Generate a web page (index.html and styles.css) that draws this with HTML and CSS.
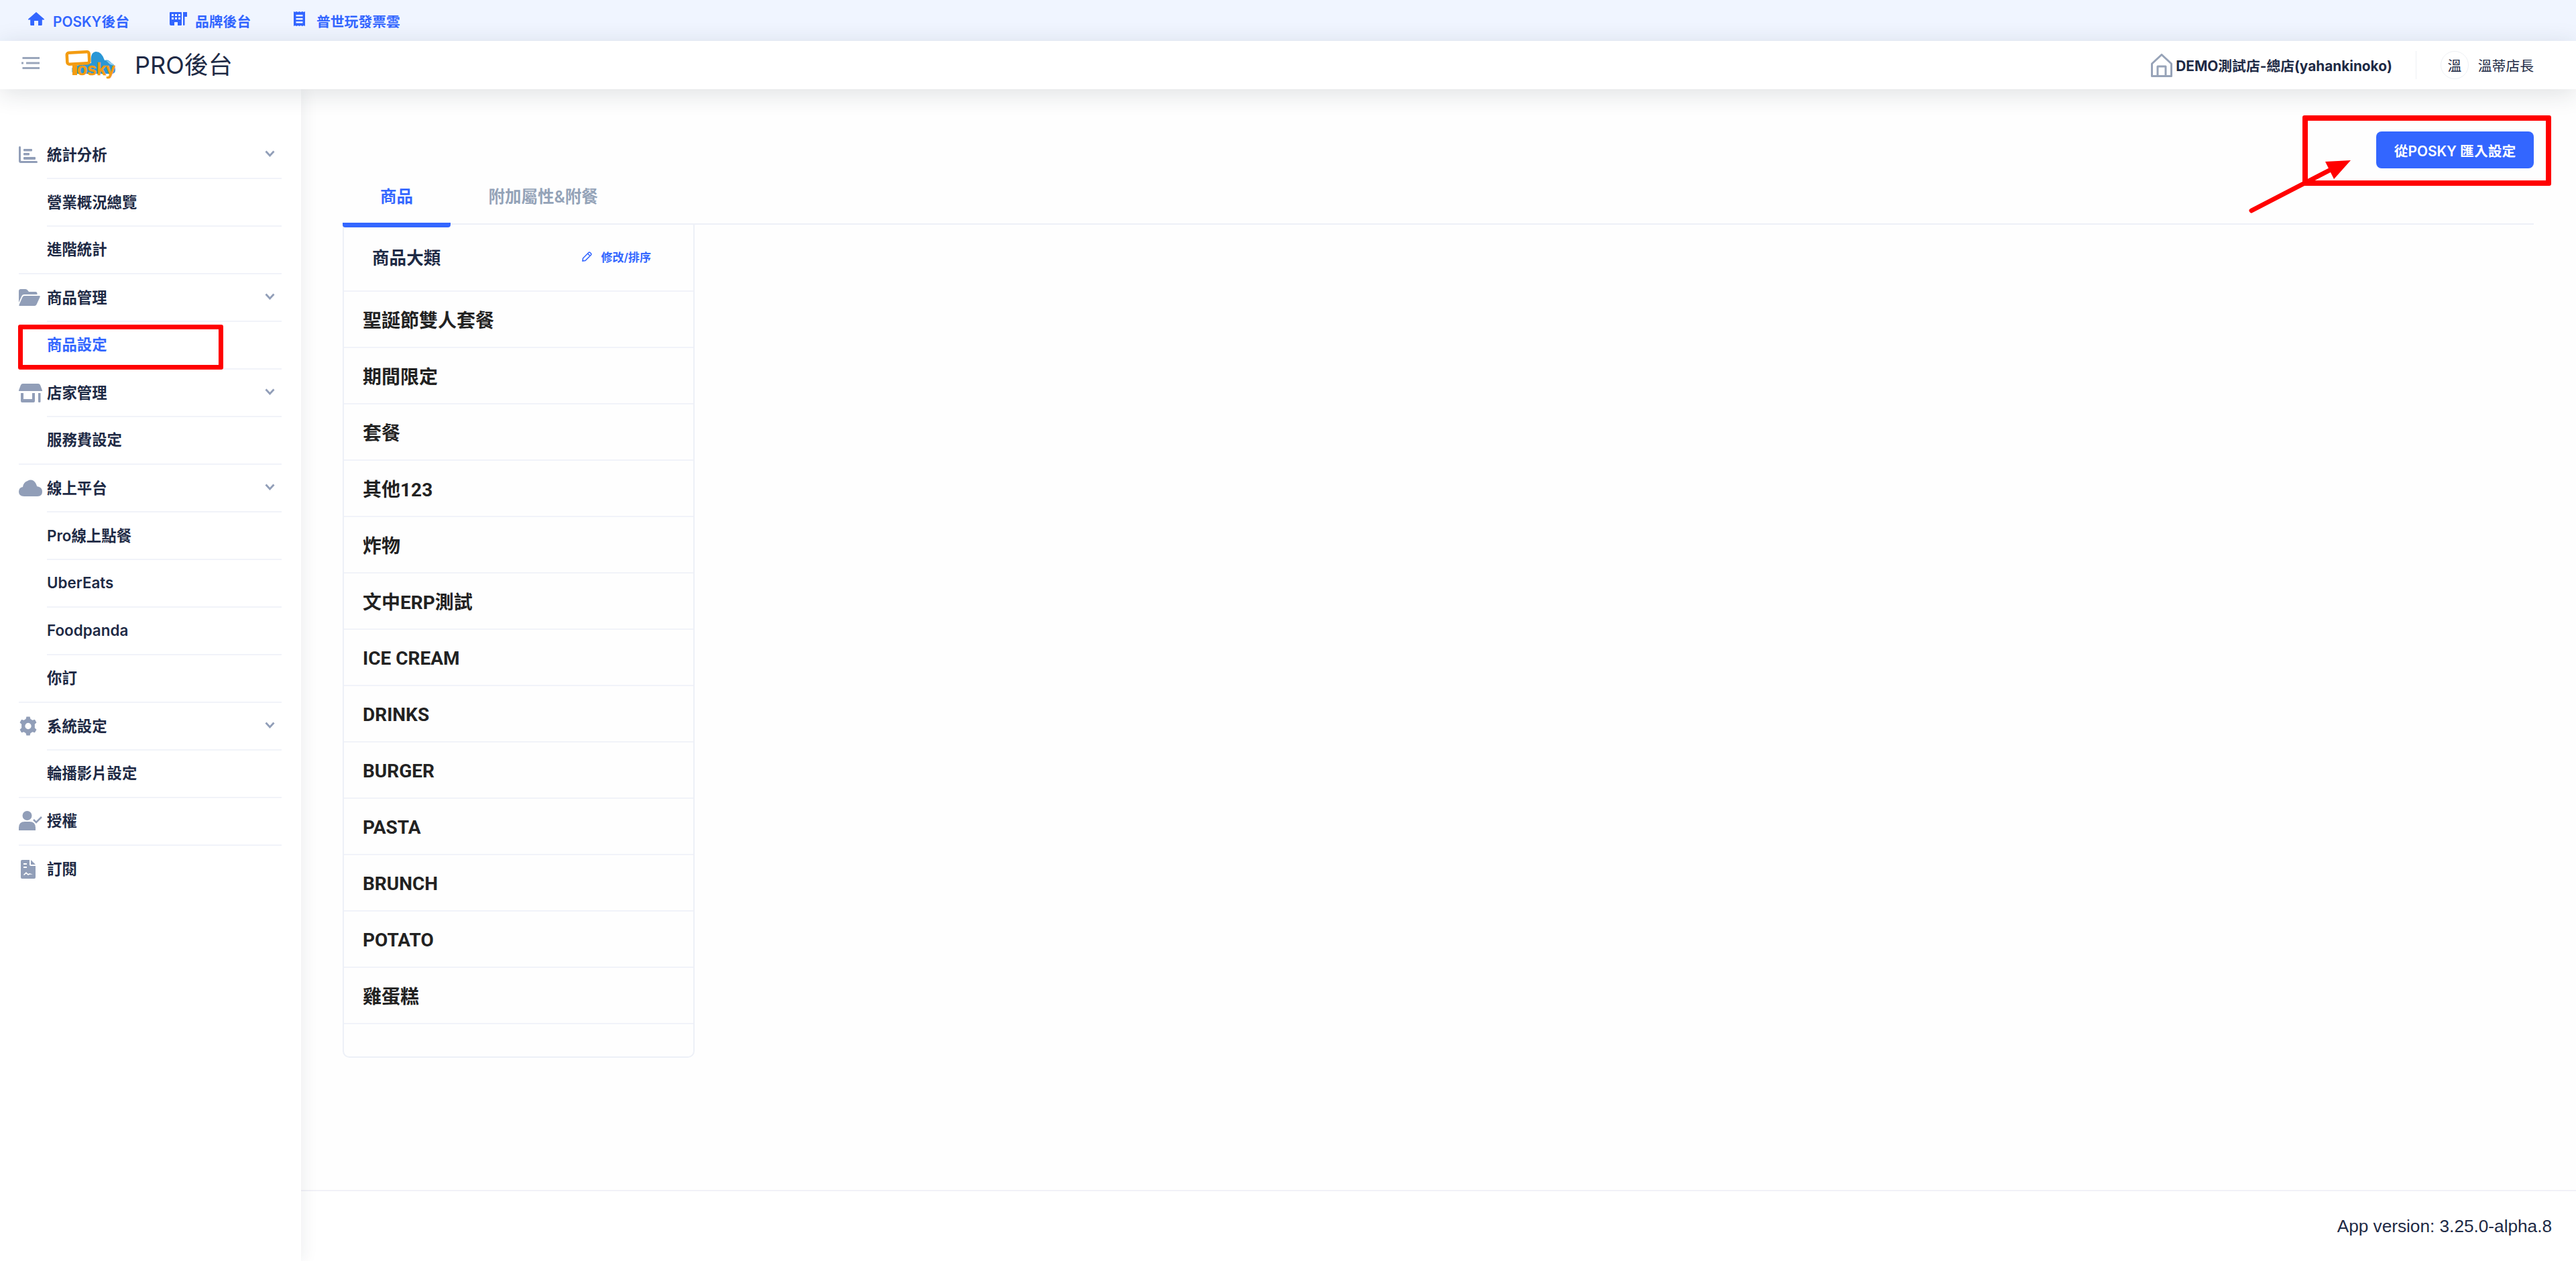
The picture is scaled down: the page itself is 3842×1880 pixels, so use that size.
FILE: index.html
```html
<!DOCTYPE html>
<html lang="zh-Hant">
<head>
<meta charset="utf-8">
<title>PRO後台</title>
<link rel="stylesheet" href="styles.css">
</head>
<body>
<div class="page">
  <nav class="topbar">
    <a class="toplink link-home">
      <svg class="ti ti-home" viewBox="0 0 24 20"><path d="M12 0 L24 10.5 Q24.3 11.6 23 11.6 H20.8 V18.8 Q20.8 20 19.6 20 H15 V13 H9 V20 H4.4 Q3.2 20 3.2 18.8 V11.6 H1 Q-.3 11.6 0 10.5 Z"/></svg>
      <span>POSKY後台</span>
    </a>
    <a class="toplink link-brand">
      <svg class="ti ti-brand" viewBox="0 0 26 20"><path fill-rule="evenodd" d="M1 0 H17 Q18 0 18 1 V19 Q18 20 17 20 H12 V15 H7 V20 H2 Q0 20 0 18 V1 Q0 0 1 0 Z M3 3 V6 H6 V3 Z M8 3 V6 H11 V3 Z M13 3 V6 H16 V3 Z M3 8 V11 H6 V8 Z M8 8 V11 H11 V8 Z M13 8 V11 H16 V8 Z"/><path d="M20 0 H26 V7 H22.5 V19 Q22.5 20 21.2 20 Q20 20 20 19 Z"/></svg>
      <span>品牌後台</span>
    </a>
    <a class="toplink link-invoice">
      <svg class="ti ti-invoice" viewBox="0 0 17 22"><path fill-rule="evenodd" d="M0 0 L2 1 L4 0 L6.5 1 L8.5 0 L10.5 1 L13 0 L15 1 L17 0 V22 L15 21 L13 22 L10.5 21 L8.5 22 L6.5 21 L4 22 L2 21 L0 22 Z M3.5 5 V7.5 H13.5 V5 Z M3.5 10 V12.5 H13.5 V10 Z M3.5 15 V17.5 H13.5 V15 Z"/></svg>
      <span>普世玩發票雲</span>
    </a>
  </nav>

  <header class="header">
    <svg class="burger" viewBox="0 0 27 18"><path d="M1.5 0 H27 V3 H1.5 Z M7 7.5 H27 V10.5 H7 Z M1.5 15 H27 V18 H1.5 Z M0 7.5 H3 V10.5 H0 Z"/></svg>
    <svg class="logo" viewBox="0 0 74 43">
      <path fill="#2a97d6" d="M14 34 Q9 34 9 28 Q9 23 15 22 Q38 18 38 18 Q36 2 45 1 Q54 1 58 14 Q64 12 68 18 Q74 20 74 28 Q74 34 68 34 Z"/>
      <path fill="#8fcdf0" d="M9 28 Q9 23 15 22 L17 34 H14 Q9 34 9 28 Z M60 14 Q68 15 72 22 L66 20 Z"/>
      <rect class="logo-sign" x="2" y="2" width="33" height="17" rx="3" transform="rotate(-3 18 10)"/>
      <path fill="#f39c12" d="M10 19 H17 V36 H10 Z"/>
      <text class="logo-text" x="17" y="36">osky</text>
    </svg>
    <h1 class="brand">PRO後台</h1>
    <div class="store">
      <svg class="store-icon" viewBox="0 0 32 35"><path d="M1.5 15 L16 1.5 L30.5 15 V33.5 H1.5 Z M10 33.5 V19 H22 V33.5" stroke-linejoin="round"/></svg>
      <span class="store-name">DEMO測試店-總店(yahankinoko)</span>
    </div>
    <div class="user">
      <span class="avatar">溫</span>
      <span class="user-name">溫蒂店長</span>
    </div>
  </header>

  <div class="body">
    <aside class="sidebar">
      <div class="row">
        <svg class="ri ic-chart" viewBox="0 0 28 25"><path d="M0 1.5 Q0 0 1.5 0 Q3 0 3 1.5 V21 Q3 22 4 22 H26.5 Q28 22 28 23.5 Q28 25 26.5 25 H3 Q0 25 0 22 Z"/><rect x="7" y="4" width="13" height="3.5" rx="1"/><rect x="7" y="10" width="9" height="3.5" rx="1"/><rect x="7" y="16" width="18" height="4" rx="1"/></svg>
        <div class="label"><span>統計分析</span><svg class="chev" viewBox="0 0 15 10"><path d="M1.5 1.5 L7.5 8 L13.5 1.5"/></svg></div>
      </div>
      <div class="row"><span></span><div class="label">營業概況總覽</div></div>
      <div class="row last"><span></span><div class="label">進階統計</div></div>

      <div class="row">
        <svg class="ri ic-folder" viewBox="0 0 32 25"><path d="M0 20 V3 Q0 0 3 0 H10 Q12 0 13 1.5 L15 4 H25 Q27.5 4 27.5 7 V8 H8 Q5.500 8 4.500 10 Z"/><path d="M1 25 Q0 25 .5 23.500 L5.500 12 Q6.500 10 8.500 10 H30.500 Q32.300 10 31.500 12 L26.500 23 Q25.500 25 23.500 25 Z"/></svg>
        <div class="label"><span>商品管理</span><svg class="chev" viewBox="0 0 15 10"><path d="M1.5 1.5 L7.5 8 L13.5 1.5"/></svg></div>
      </div>
      <div class="row last"><span></span><div class="label label-active">商品設定</div></div>

      <div class="row">
        <svg class="ri ic-store" viewBox="0 0 35 28"><path d="M6 0 H29 Q31 0 32 2 L35 10 V11 H0 V10 L3 2 Q4 0 6 0 Z"/><path d="M3 14 H7 V23 H20 V14 H24 V26 Q24 28 22 28 H5 Q3 28 3 26 Z"/><path d="M29 14 H32.500 V27 Q32.500 28 30.700 28 Q29 28 29 27 Z"/></svg>
        <div class="label"><span>店家管理</span><svg class="chev" viewBox="0 0 15 10"><path d="M1.5 1.5 L7.5 8 L13.5 1.5"/></svg></div>
      </div>
      <div class="row last"><span></span><div class="label">服務費設定</div></div>

      <div class="row">
        <svg class="ri ic-cloud" viewBox="0 0 35 25"><path d="M8 25 Q0 25 0 18 Q0 12 6 11 Q7 4 13 2 Q20 -2 25 5 Q27 9 27 10 Q35 11 35 18 Q35 25 28 25 Z"/></svg>
        <div class="label"><span>線上平台</span><svg class="chev" viewBox="0 0 15 10"><path d="M1.5 1.5 L7.5 8 L13.5 1.5"/></svg></div>
      </div>
      <div class="row"><span></span><div class="label">Pro線上點餐</div></div>
      <div class="row"><span></span><div class="label">UberEats</div></div>
      <div class="row"><span></span><div class="label">Foodpanda</div></div>
      <div class="row last"><span></span><div class="label">你訂</div></div>

      <div class="row">
        <svg class="ri ic-gear" viewBox="0 0 24 24"><path fill-rule="evenodd" d="M14.2 0 L15 3.100 Q16.300 3.600 17.400 4.500 L20.500 3.600 L22.700 7.400 L20.400 9.700 Q20.600 12 20.400 14.300 L22.700 16.600 L20.500 20.400 L17.400 19.500 Q16.300 20.400 15 20.900 L14.200 24 H9.800 L9 20.900 Q7.700 20.400 6.600 19.500 L3.500 20.400 L1.300 16.600 L3.600 14.300 Q3.400 12 3.600 9.700 L1.300 7.400 L3.500 3.600 L6.600 4.500 Q7.700 3.600 9 3.100 L9.800 0 Z M12 8 A4 4 0 1 0 12 16 A4 4 0 1 0 12 8 Z"/></svg>
        <div class="label"><span>系統設定</span><svg class="chev" viewBox="0 0 15 10"><path d="M1.5 1.5 L7.5 8 L13.5 1.5"/></svg></div>
      </div>
      <div class="row last"><span></span><div class="label">輪播影片設定</div></div>

      <div class="row last">
        <svg class="ri ic-user" viewBox="0 0 35 29"><circle cx="12.500" cy="7" r="7"/><path d="M0 29 V25 Q0 16 9 16 H16 Q25 16 25 25 V29 Z"/><path class="ic-check" d="M22 13 L26 17 L34 9"/></svg>
        <div class="label">授權</div>
      </div>
      <div class="row end">
        <svg class="ri ic-doc" viewBox="0 0 22 28"><path fill-rule="evenodd" d="M2 0 H13 V7 Q13 9 15 9 H22 V26 Q22 28 20 28 H2 Q0 28 0 26 V2 Q0 0 2 0 Z M4 5 V7 H9 V5 Z M4 10 V12 H9 V10 Z M4 22 L8 18 L11 21 L13 20 L18 21.500 L13 21.800 L11 23 L8 20.500 L5 23 Z"/><path d="M15 0 L22 7 H15 Z"/></svg>
        <div class="label">訂閱</div>
      </div>
    </aside>

    <div class="main">
      <section class="content">
        <div class="actions"><button class="import">從POSKY 匯入設定</button></div>
        <div class="tabs">
          <div class="tab tab-on">商品</div>
          <div class="tab">附加屬性&amp;附餐</div>
        </div>
        <div class="card">
          <div class="card-head">
            <h2 class="card-title">商品大類</h2>
            <a class="edit">
              <svg class="edit-icon" viewBox="0 0 15 15"><path d="M1 14 L1.500 10 L10 1.500 Q11 .8 12 1.500 L13.500 3 Q14.200 4 13.500 5 L5 13.500 Z M8.500 3 L12 6.500"/></svg>
              <span>修改/排序</span>
            </a>
          </div>
          <div class="cat">聖誕節雙人套餐</div>
          <div class="cat">期間限定</div>
          <div class="cat">套餐</div>
          <div class="cat">其他123</div>
          <div class="cat">炸物</div>
          <div class="cat">文中ERP測試</div>
          <div class="cat latin">ICE CREAM</div>
          <div class="cat latin">DRINKS</div>
          <div class="cat latin">BURGER</div>
          <div class="cat latin">PASTA</div>
          <div class="cat latin">BRUNCH</div>
          <div class="cat latin">POTATO</div>
          <div class="cat">雞蛋糕</div>
        </div>
      </section>
      <footer class="footer">App version: 3.25.0-alpha.8</footer>
    </div>
  </div>

  <div class="mark mark-side"></div>
  <div class="mark mark-top"></div>
  <svg class="arrow" viewBox="0 0 160 84"><path class="arrow-shaft" d="M4 79 L124 17"/><path class="arrow-head" d="M114 6 L152 4 L127 32 Z"/></svg>
</div>
</body>
</html>
```

FILE: styles.css
```css
* { box-sizing: border-box; }
html, body { margin: 0; padding: 0; }
body {
  background: #fff;
  color: #1e2a45;
  font-family: Inter, "Noto Sans CJK TC", sans-serif;
  overflow: hidden;
}
.page { position: relative; width: 3842px; height: 1880px; display: flex; flex-direction: column; overflow: hidden; }

/* top link bar */
.topbar { height: 61px; flex: none; background: #f0f5ff; display: flex; align-items: center; padding-left: 42px; }
.toplink { display: flex; align-items: center; color: #3366ff; font-size: 20.8px; font-weight: 600; white-space: nowrap; }
.link-home { gap: 13px; width: 211px; }
.link-brand { gap: 12px; width: 185px; }
.link-invoice { gap: 17px; }
.ti { fill: #3366ff; flex: none; margin-top: -6px; }
.ti-home { width: 24px; height: 20px; }
.ti-brand { width: 26px; height: 20px; }
.ti-invoice { width: 17px; height: 22px; }

/* header */
.header {
  height: 72px; flex: none; background: #fff; display: flex; align-items: center;
  padding: 0 63px 0 32px; position: relative; z-index: 3;
  box-shadow: 0 6px 36px rgba(30, 40, 60, .14);
}
.burger { width: 27px; height: 18px; fill: #9aa6bb; flex: none; margin-top: -6px; }
.logo { width: 74px; height: 43px; margin-left: 39px; flex: none; overflow: visible; }
.logo-sign { fill: #fff; stroke: #f39c12; stroke-width: 4.5; }
.logo-text { fill: #f39c12; font-family: "Liberation Sans", sans-serif; font-weight: 700; font-size: 25px; stroke: #f39c12; stroke-width: .6; }
.brand { margin: 0 0 0 29px; font-size: 36px; font-weight: 400; line-height: 1; white-space: nowrap; }
.store { margin-left: auto; display: flex; align-items: center; gap: 5px; height: 42px; padding-right: 35px; border-right: 1px solid #eef0f4; }
.store-icon { width: 32px; height: 35px; fill: none; stroke: #97a3b8; stroke-width: 3; }
.store-name { font-size: 20.8px; font-weight: 700; white-space: nowrap; }
.user { display: flex; align-items: center; margin-left: 36px; }
.avatar { width: 42px; height: 42px; border: 1px solid #eef0f4; border-radius: 50%; display: flex; align-items: center; justify-content: center; font-size: 20.8px; }
.user-name { margin-left: 14px; font-size: 20.8px; white-space: nowrap; }

/* body */
.body { flex: 1; display: flex; min-height: 0; }
.sidebar {
  width: 449px; flex: none; background: #fff; padding-top: 63px; position: relative; z-index: 2;
  box-shadow: 4px 0 22px rgba(30, 40, 60, .07);
}
.row { display: grid; grid-template-columns: 42px 1fr; height: 71px; margin: 0 29px 0 28px; align-items: stretch; }
.row.last { border-bottom: 2px solid #f1f3f9; }
.label {
  display: flex; align-items: center; justify-content: space-between;
  font-size: 22.4px; font-weight: 600; padding: 0 10px 3px 0;
  border-bottom: 2px solid #f1f3f9; white-space: nowrap;
}
.row.last .label, .row.end .label { border-bottom: 0; padding-bottom: 5px; }
.label-active { color: #3366ff; }
.ri { fill: #919eb8; align-self: center; margin-top: -2px; }
.ic-chart { width: 28px; height: 25px; }
.ic-folder { width: 32px; height: 25px; }
.ic-store { width: 35px; height: 28px; }
.ic-cloud { width: 35px; height: 25px; }
.ic-gear { width: 28px; height: 29px; }
.ic-user { width: 35px; height: 29px; }
.ic-doc { width: 22px; height: 28px; margin-left: 3px; }
.ic-check { fill: none; stroke: #919eb8; stroke-width: 2.500; }
.chev { width: 15px; height: 10px; fill: none; stroke: #919eb8; stroke-width: 2.800; }

/* main */
.main { flex: 1; min-width: 0; display: flex; flex-direction: column; background: #fff; }
.content { flex: 1; padding: 63px 63px 0 62px; background: #fefefe; }
.actions { display: flex; justify-content: flex-end; height: 78px; }
.import {
  width: 235px; height: 55px; border: 0; border-radius: 8px; background: #3366ff; color: #fff;
  font-family: Inter, "Noto Sans CJK TC", sans-serif; font-size: 20.8px; font-weight: 600; padding: 0; white-space: nowrap;
}
.tabs { display: flex; height: 61px; border-bottom: 2px solid #edf0f7; }
.tab {
  padding: 0 56.500px 24px; height: 65px; display: flex; align-items: center;
  color: #94a3b8; font-size: 24.500px; font-weight: 600; white-space: nowrap; border-bottom: 7px solid transparent;
}
.tab-on { color: #3366ff; border-bottom-color: #3366ff; border-radius: 0 0 4px 4px; padding: 0 56px 24px; }
.card { width: 525px; height: 1242px; border: 2px solid #edf0f7; border-top: 0; border-radius: 0 0 10px 10px; }
.card-head { height: 100px; display: flex; align-items: center; border-bottom: 2px solid #f1f3f9; padding: 0 63px 4px 42px; justify-content: space-between; }
.card-title { margin: 0; font-size: 25.6px; font-weight: 600; }
.edit { display: flex; align-items: center; gap: 14px; color: #3366ff; font-size: 17px; font-weight: 600; }
.edit-icon { width: 15px; height: 15px; fill: none; stroke: #3366ff; stroke-width: 1.600; }
.cat {
  height: 84px; display: flex; align-items: center; padding-left: 28px; border-bottom: 2px solid #f1f3f9;
  font-family: Roboto, "Noto Sans CJK TC", sans-serif; font-size: 28px; font-weight: 700; color: #222;
}
.cat.latin { padding-top: 3px; }
.footer {
  height: 106px; flex: none; border-top: 2px solid #f1f1f8; background: #fff;
  display: flex; align-items: center; justify-content: flex-end; padding-right: 36px;
  font-family: "Liberation Sans", Arial, sans-serif; font-size: 26.200px;
}

/* annotations drawn over the screenshot */
.mark { position: absolute; border: 8px solid #ff0000; border-radius: 3px; z-index: 5; }
.mark-side { left: 27px; top: 484px; width: 306px; height: 67px; border-width: 7px; }
.mark-top { left: 3434px; top: 172px; width: 371px; height: 105px; }
.arrow { position: absolute; left: 3354px; top: 235px; width: 160px; height: 84px; z-index: 6; }
.arrow-shaft { fill: none; stroke: #ff0000; stroke-width: 7; stroke-linecap: round; }
.arrow-head { fill: #ff0000; }
```
